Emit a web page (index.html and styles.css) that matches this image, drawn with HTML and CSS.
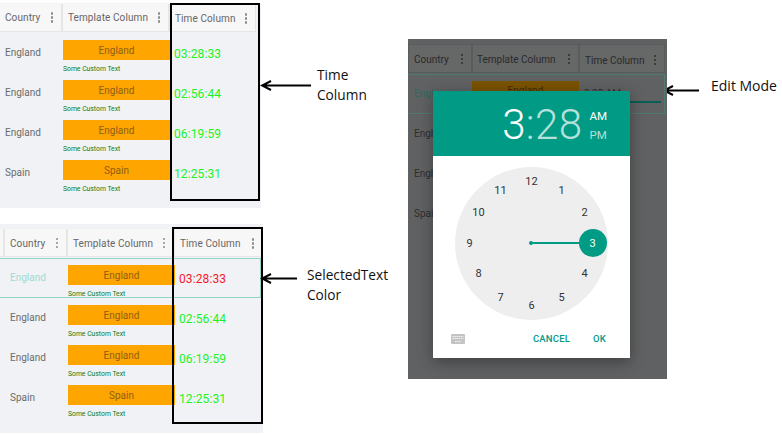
FILE: index.html
```html
<!DOCTYPE html>
<html lang="en">
<head>
<meta charset="utf-8">
<title>Time Column</title>
<link rel="stylesheet" href="styles.css">
</head>
<body>
<main class="canvas">

  <section class="grid-shot shot-one">
    <div class="head">
      <div class="hcell c-country">Country<span class="dots"><i></i><i></i><i></i></span></div>
      <div class="hcell c-template">Template Column<span class="dots"><i></i><i></i><i></i></span></div>
      <div class="hcell c-time">Time Column<span class="dots"><i></i><i></i><i></i></span></div>
    </div>
    <div class="row"><div class="cell c-country">England</div><div class="c-template tpl"><div class="tag">England</div><div class="custom">Some Custom Text</div></div><div class="cell c-time time">03:28:33</div></div>
    <div class="row"><div class="cell c-country">England</div><div class="c-template tpl"><div class="tag">England</div><div class="custom">Some Custom Text</div></div><div class="cell c-time time">02:56:44</div></div>
    <div class="row"><div class="cell c-country">England</div><div class="c-template tpl"><div class="tag">England</div><div class="custom">Some Custom Text</div></div><div class="cell c-time time">06:19:59</div></div>
    <div class="row"><div class="cell c-country">Spain</div><div class="c-template tpl"><div class="tag">Spain</div><div class="custom">Some Custom Text</div></div><div class="cell c-time time">12:25:31</div></div>
  </section>
  <div class="outline outline-one"></div>

  <section class="grid-shot shot-two">
    <div class="head">
      <div class="hcell c-stub"></div>
      <div class="hcell c-country">Country<span class="dots"><i></i><i></i><i></i></span></div>
      <div class="hcell c-template">Template Column<span class="dots"><i></i><i></i><i></i></span></div>
      <div class="hcell c-time">Time Column<span class="dots"><i></i><i></i><i></i></span></div>
    </div>
    <div class="row selected"><div class="c-stub"></div><div class="cell c-country">England</div><div class="c-template tpl"><div class="tag">England</div><div class="custom">Some Custom Text</div></div><div class="cell c-time time">03:28:33</div></div>
    <div class="row"><div class="c-stub"></div><div class="cell c-country">England</div><div class="c-template tpl"><div class="tag">England</div><div class="custom">Some Custom Text</div></div><div class="cell c-time time">02:56:44</div></div>
    <div class="row"><div class="c-stub"></div><div class="cell c-country">England</div><div class="c-template tpl"><div class="tag">England</div><div class="custom">Some Custom Text</div></div><div class="cell c-time time">06:19:59</div></div>
    <div class="row"><div class="c-stub"></div><div class="cell c-country">Spain</div><div class="c-template tpl"><div class="tag">Spain</div><div class="custom">Some Custom Text</div></div><div class="cell c-time time">12:25:31</div></div>
  </section>
  <div class="outline outline-two"></div>

  <svg class="arrow arrow-one" width="60" height="14" viewBox="0 0 60 14"><path d="M51 6.500H3M11 2 2 6.500 11 11" fill="none" stroke="#000" stroke-width="2"/></svg>
  <p class="note note-one">Time<br>Column</p>
  <svg class="arrow arrow-two" width="44" height="14" viewBox="0 0 44 14"><path d="M37 6.500H3M11 2 2 6.500 11 11" fill="none" stroke="#000" stroke-width="2"/></svg>
  <p class="note note-two">SelectedText<br>Color</p>
  <svg class="arrow arrow-three" width="40" height="14" viewBox="0 0 40 14"><path d="M37 6.500H3M11 2 2 6.500 11 11" fill="none" stroke="#000" stroke-width="2"/></svg>
  <p class="note note-three">Edit Mode</p>

  <section class="phone">
    <div class="dim-head">
      <div class="dim-h d-country">Country<span class="dots"><i></i><i></i><i></i></span></div>
      <div class="dim-h d-template">Template Column<span class="dots"><i></i><i></i><i></i></span></div>
      <div class="dim-h d-time">Time Column<span class="dots"><i></i><i></i><i></i></span></div>
    </div>
    <div class="dim-edit">
      <span class="dim-text">England</span>
      <span class="dim-tag">England</span>
      <span class="dim-value">3:28 AM</span>
    </div>
    <div class="dim-row">England</div>
    <div class="dim-row">England</div>
    <div class="dim-row">Spain</div>

    <div class="dialog">
      <header class="dialog-head">
        <span class="big"><b>3</b><span class="fade">:28</span></span>
        <span class="ampm"><b>AM</b><span class="fade">PM</span></span>
      </header>
      <div class="dialog-body">
        <div class="clock">
          <span class="hand"></span><span class="pivot"></span><span class="picked"></span>
          <span class="num n12">12</span><span class="num n1">1</span><span class="num n2">2</span>
          <span class="num n3">3</span><span class="num n4">4</span><span class="num n5">5</span>
          <span class="num n6">6</span><span class="num n7">7</span><span class="num n8">8</span>
          <span class="num n9">9</span><span class="num n10">10</span><span class="num n11">11</span>
        </div>
      </div>
      <footer class="dialog-foot">
        <svg class="kbd" width="14" height="11" viewBox="0 0 14 11"><rect width="14" height="10" rx="1" fill="#c4c4c4"/><path d="M1.500 2.500h11M1.500 4.500h11M4 7.500h6" stroke="#eee" stroke-width="1" stroke-dasharray="1.500 .5"/></svg>
        <span class="action cancel">CANCEL</span>
        <span class="action">OK</span>
      </footer>
    </div>
  </section>
</main>
</body>
</html>
```
FILE: styles.css
```css
* { box-sizing: border-box; }
html, body { margin: 0; padding: 0; background: #fff; }
body { font-family: Roboto, "Liberation Sans", sans-serif; overflow: hidden; }
.canvas { position: relative; width: 782px; height: 435px; overflow: hidden; }

/* screenshot panels placed on the canvas */
.grid-shot { position: absolute; left: 0; background: #f0f2f6; color: #6b6b6b; font-size: 10px; }
.shot-one { top: 3px; width: 261px; height: 205px; padding-top: 1px; }
.shot-two { top: 224px; width: 263px; height: 209px; padding-top: 5px; }

.head { display: flex; height: 29px; }
.hcell { display: flex; align-items: center; justify-content: space-between; height: 28px; background: #f7f7f8; border-right: 2px solid #e6e6e6; border-bottom: 1px solid #e6e6e6; padding: 0 8px 0 5px; font-size: 10px; letter-spacing: .1px; color: #666; }
.hcell.c-time { padding-top: 2px; border-right-width: 1px; }
.shot-two .hcell.c-country, .shot-two .hcell.c-template { padding-top: 1px; }
.dots { display: flex; flex-direction: column; gap: 1.500px; }
.dots i { display: block; width: 2.500px; height: 2.500px; border-radius: 50%; background: #8c8c8c; }

.c-stub { width: 5px; flex: none; padding: 0; }
.c-country { width: 63px; flex: none; }
.c-template { width: 107px; flex: none; }
.c-time { width: 86px; flex: none; }
.shot-two .c-time { width: 88px; }

.row { display: flex; height: 40px; }
.cell { display: flex; align-items: center; padding-left: 5px; padding-bottom: 2px; }
.time { font-size: 12px; color: #1cf21c; padding-left: 4px; padding-top: 4px; letter-spacing: .1px; }
.tpl { padding-top: 7px; }
.tag { height: 20px; background: #ffa500; color: #8e6014; text-align: center; line-height: 21px; font-size: 10px; }
.custom { margin-top: 5px; font-size: 6.800px; line-height: 9px; color: #0f7a0f; }

.selected { width: 261px; border-top: 1px solid #93d6c9; border-bottom: 1px solid #93d6c9; border-right: 1px solid #93d6c9; height: 40px; }
.selected .tpl { padding-top: 6px; }
.selected .c-country { color: #9fdad0; }
.selected .time { color: #f8182c; }

.outline { position: absolute; border: 2px solid #000; }
.outline-one { left: 170px; top: 3px; width: 90px; height: 198px; }
.outline-two { left: 172px; top: 227px; width: 91px; height: 197px; }

.arrow { position: absolute; }
.arrow-one { left: 260px; top: 79px; }
.arrow-two { left: 260px; top: 272px; }
.arrow-three { left: 662px; top: 84px; }
.note { position: absolute; margin: 0; font-family: "Open Sans", "Liberation Sans", sans-serif; font-size: 13.700px; line-height: 20px; color: #111; }
.note-one { left: 317px; top: 65px; }
.note-two { left: 307px; top: 265px; }
.note-three { left: 711px; top: 76px; font-size: 14px; }

/* dimmed app behind the picker */
.phone { position: absolute; left: 408px; top: 39px; width: 259px; height: 340px; background: #606162; color: #2e2e2e; font-size: 10px; overflow: hidden; }
.dim-head { display: flex; height: 30px; margin-top: 5px; }
.dim-h { display: flex; align-items: center; justify-content: space-between; background: #666767; border: 1px solid #5a5b5b; padding: 1px 8px 0 5px; color: #2a2a2a; height: 29px; }
.d-country { width: 64px; }
.d-template { width: 107px; padding-left: 4px; }
.d-time { width: 86px; padding-top: 3px; }
.phone .dots i { background: #2e2e2e; }
.dim-edit { display: flex; align-items: flex-start; height: 40px; margin-right: 2px; border: 1px solid #4f7a72; border-left: 0; padding-left: 6px; }
.dim-text { width: 58px; margin-top: 13px; color: #2f6b60; }
.dim-tag { width: 107px; height: 20px; background: #7a5300; color: #3f2b00; text-align: center; line-height: 20px; margin-top: 6px; }
.dim-value { margin: 13px 3px 0 5px; flex: 1; height: 15px; border-bottom: 2px solid #0a5e52; }
.dim-row { height: 40px; padding: 14px 0 0 6px; }

/* picker dialog */
.dialog { position: absolute; left: 25px; top: 52px; width: 197px; height: 267px; background: #fff; box-shadow: 0 4px 14px rgba(0, 0, 0, .35); display: flex; flex-direction: column; }
.dialog-head { height: 65px; flex: none; background: #009a85; color: #fff; display: flex; justify-content: flex-end; align-items: center; gap: 7px; padding: 3px 23px 0 0; font-weight: 400; }
.dialog-head b { font-weight: 400; }
.fade { color: #b2e0da; }
.big { font-size: 42px; line-height: 1; letter-spacing: .4px; font-weight: 300; }
.big b { font-weight: 300; }
.ampm { display: flex; flex-direction: column; gap: 6px; font-size: 11.500px; line-height: 13px; margin-top: 1px; }
.dialog-body { flex: 1; display: flex; justify-content: center; padding-top: 11px; }
.clock { position: relative; width: 153px; height: 153px; border-radius: 50%; background: #eeeeee; margin-left: -1px; }
.hand { position: absolute; left: 76px; top: 75px; width: 50px; height: 2px; background: #009a85; }
.pivot { position: absolute; left: 74px; top: 74px; width: 4px; height: 4px; border-radius: 50%; background: #009a85; }
.picked { position: absolute; left: 124px; top: 62px; width: 28px; height: 28px; border-radius: 50%; background: #009a85; }
.num { position: absolute; width: 20px; height: 14px; margin: -7px 0 0 -10px; text-align: center; font-size: 11px; line-height: 14px; color: #333; }
.n12 { left: 77px; top: 15px; }
.n1  { left: 107px; top: 24px; }
.n2  { left: 130px; top: 46px; }
.n3  { left: 138px; top: 77px; color: #fff; }
.n4  { left: 130px; top: 107px; }
.n5  { left: 107px; top: 131px; }
.n6  { left: 77px; top: 139px; }
.n7  { left: 46px; top: 131px; }
.n8  { left: 24px; top: 107px; }
.n9  { left: 15px; top: 77px; }
.n10 { left: 24px; top: 46px; }
.n11 { left: 46px; top: 24px; }
.dialog-foot { height: 49px; flex: none; display: flex; align-items: center; padding: 0 24px 12px 18px; font-size: 9.500px; font-weight: 500; letter-spacing: .2px; color: #009a85; }
.kbd { margin: 2px auto 0 0; }
.cancel { margin-right: 23px; }
```
